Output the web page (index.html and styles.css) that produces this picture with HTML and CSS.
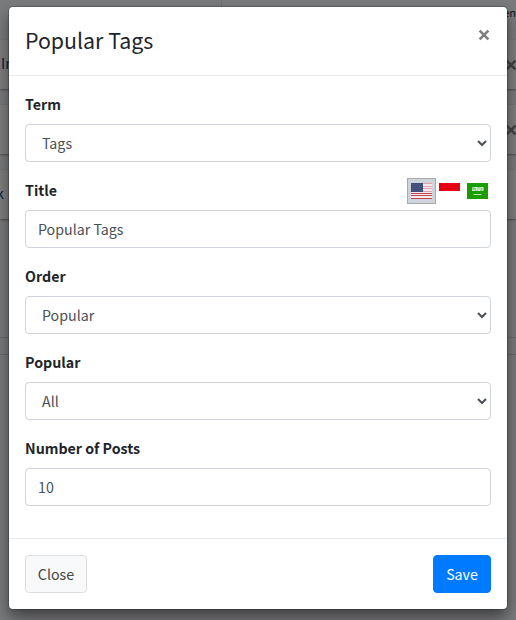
FILE: index.html
```html
<!DOCTYPE html>
<html lang="en">
<head>
<meta charset="utf-8">
<title>Popular Tags</title>
<link rel="stylesheet" href="styles.css">
</head>
<body>
<div class="page" aria-hidden="true">
  <div class="page-head"><span class="page-col"></span><span class="page-label">en</span></div>
  <div class="widget"><span class="widget-name">In</span><svg class="widget-x" width="12" height="12" viewBox="0 0 12 12"><path d="M1.6 1.6 10.4 10.4M10.4 1.6 1.6 10.4"/></svg></div>
  <div class="widget"><span></span><svg class="widget-x" width="12" height="12" viewBox="0 0 12 12"><path d="M1.6 1.6 10.4 10.4M10.4 1.6 1.6 10.4"/></svg></div>
  <div class="widget"><span class="widget-end">k</span></div>
  <div class="page-foot"></div>
</div>
<div class="overlay">
  <form class="modal">
    <header class="modal-header">
      <h4 class="modal-title">Popular Tags</h4>
      <button type="button" class="dismiss" aria-label="Close">
        <svg width="12" height="12" viewBox="0 0 12 12"><path d="M1.6 1.6 10.4 10.4M10.4 1.6 1.6 10.4"/></svg>
      </button>
    </header>
    <div class="modal-body">
      <div class="group">
        <label class="label" for="term">Term</label>
        <select class="control" id="term"><option>Tags</option></select>
      </div>
      <div class="group">
        <div class="label-row">
          <label class="label" for="title">Title</label>
          <div class="flags">
            <span class="flag active">
              <svg width="21" height="16" viewBox="0 0 21 16" shape-rendering="crispEdges">
                <path fill="#f2eaec" d="M0 0h21v16H0z"/>
                <path stroke="#dfa3a9" d="M0 .5h21M0 3.5h21M0 5.5h21M0 8.5h21"/>
                <path stroke="#c5464e" d="M0 10.5h21M0 12.5h21M0 15.5h21"/>
                <path fill="#3c4f78" d="M0 0h12v9H0z"/>
                <path stroke="#4e6088" stroke-dasharray="1 1" d="M1 1.5h10M2 3.5h9M1 5.5h10M2 7.5h9"/>
              </svg>
            </span>
            <span class="flag">
              <svg width="21" height="16" viewBox="0 0 21 16"><path fill="#fff" d="M0 0h21v16H0z"/><path fill="#e70011" d="M0 0h21v8H0z"/></svg>
            </span>
            <span class="flag">
              <svg width="21" height="16" viewBox="0 0 21 16">
                <path fill="#199d00" d="M0 0h21v16H0z"/>
                <path fill="#8fd085" d="M5 4h11.500v4H5z"/>
                <path fill="none" stroke="#e4f5e1" stroke-width=".8" d="M5 7.500h3M7.500 4.500h2v3M11 4.500v3h2v-3M14 4.500h2v3M6.500 11.500h8"/>
              </svg>
            </span>
          </div>
        </div>
        <input class="control" id="title" type="text" value="Popular Tags">
      </div>
      <div class="group">
        <label class="label" for="order">Order</label>
        <select class="control" id="order"><option>Popular</option></select>
      </div>
      <div class="group">
        <label class="label" for="popular">Popular</label>
        <select class="control" id="popular"><option>All</option></select>
      </div>
      <div class="group">
        <label class="label" for="posts">Number of Posts</label>
        <input class="control" id="posts" type="text" value="10">
      </div>
    </div>
    <footer class="modal-footer">
      <button type="button" class="btn btn-light">Close</button>
      <button type="button" class="btn btn-primary">Save</button>
    </footer>
  </form>
</div>
</body>
</html>
```
FILE: styles.css
```css
* { box-sizing: border-box; }
html, body { height: 100%; }
body {
  margin: 0;
  overflow: hidden;
  background: #7a7b7d;
  color: #212529;
  font: 14.22px/24px "Source Sans Pro", "Noto Sans CJK SC", sans-serif;
}
.page { height: 620px; overflow: hidden; }
.page-head { display: flex; justify-content: space-between; height: 40px; }
.page-col { width: 222px; height: 40px; border-right: 1px solid #6f7071; }
.page-label { color: #111; font-size: 11px; }
.widget {
  display: flex;
  justify-content: space-between;
  align-items: center;
  height: 49px;
  margin-bottom: 16px;
  padding-bottom: 4px;
  background: #7f7f7f;
  box-shadow: 0 1px 2px rgba(0, 0, 0, .4);
}
.widget-name { color: #00204a; padding-left: 1px; }
.widget-end { color: #00204a; margin-left: -4px; }
.widget-x { flex: none; margin: 5px -1px 0 0; fill: none; stroke: #404346; stroke-width: 2.6; }
.page-foot { height: 18px; margin-top: 118px; border-top: 1px solid #6c6c6d; border-bottom: 1px solid #6c6c6d; }

.overlay { position: absolute; inset: 0; padding: 7px 9px; }
.modal {
  height: 602px;
  background: #fff;
  border-radius: 4px;
  box-shadow: 0 0 0 1px rgba(0, 0, 0, .2), 0 8px 16px rgba(0, 0, 0, .5);
}
.modal-header {
  display: flex;
  justify-content: space-between;
  height: 69px;
  padding: 16px;
  border-bottom: 1px solid #e9ecef;
}
.modal-title { margin: 0; font-size: 21.33px; line-height: 34px; font-weight: 400; }
.dismiss { width: 14px; height: 14px; margin-top: 5px; padding: 1px; border: 0; background: none; }
.dismiss svg { display: block; fill: none; stroke: #7f7f7f; stroke-width: 2.6; }
.modal-body { height: 462px; padding: 16px; }
.group { margin-bottom: 16px; }
.label { display: block; height: 24px; margin-bottom: 8px; font-weight: 700; }
.label-row { display: flex; justify-content: space-between; height: 32px; }
.flags { display: flex; height: 26px; }
.flags { margin-right: -1px; }
.flag { width: 28px; height: 26px; padding: 5px 3px; }
.flag svg { display: block; }
.flag.active { width: 29px; padding: 4px 3px; background: #ced4da; border: 1px solid #aaa; }
.control {
  display: block;
  width: 100%;
  height: 38px;
  padding: 6px 12px;
  border: 1px solid #ced4da;
  border-radius: 4px;
  background: #fff;
  color: #495057;
  font: inherit;
}
.modal-footer { display: flex; justify-content: space-between; padding: 16px; border-top: 1px solid #e9ecef; }
.btn { height: 38px; padding: 6px 11px; border: 1px solid; border-radius: 4px; font: inherit; }
.btn-light { width: 62px; color: #444; background: #f8f9fa; border-color: #ddd; }
.btn-primary { width: 58px; color: #fff; background: #007bff; border-color: #007bff; }
```
